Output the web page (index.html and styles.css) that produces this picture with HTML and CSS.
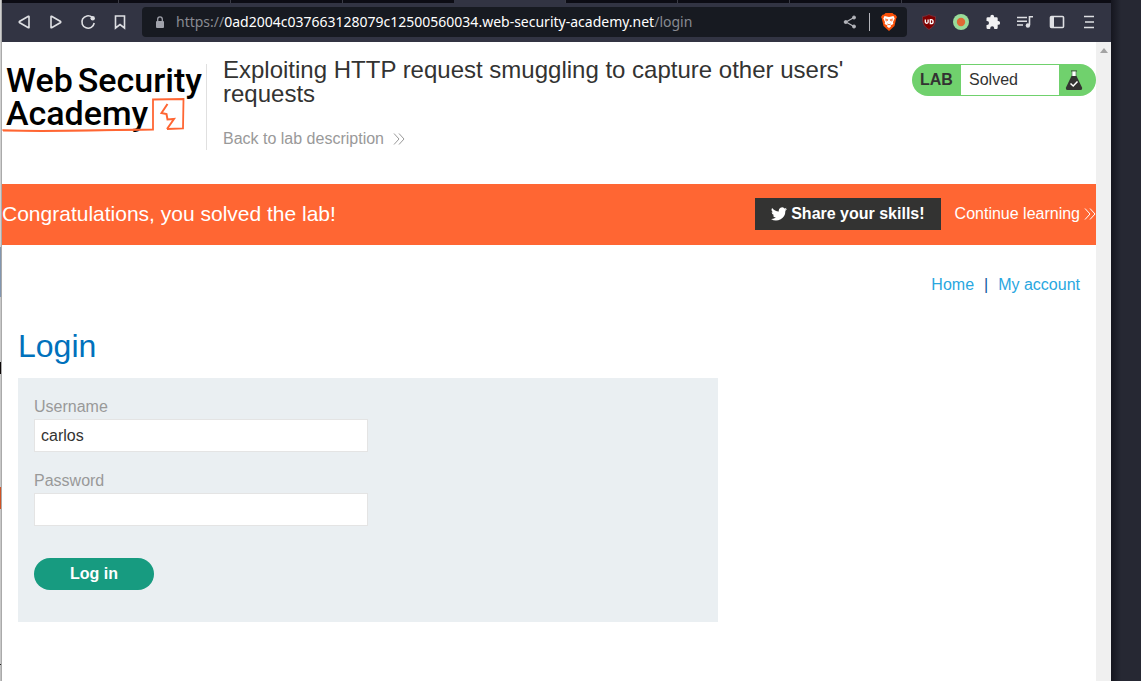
FILE: index.html
```
<!DOCTYPE html>
<html lang="en">
<head>
<meta charset="utf-8">
<title>Exploiting HTTP request smuggling to capture other users' requests</title>
<link rel="stylesheet" href="styles.css">
</head>
<body>
<div class="desktop">
  <div class="edge" aria-hidden="true"></div>
  <div class="window">
    <div class="tabs" aria-hidden="true">
      <span class="tab tab-first"></span><span class="tab"></span><span class="tab"></span><span class="tab tab-last"></span><span class="tab tab-active"></span><span class="tab"></span><span class="tab"></span><span class="tab"></span>
    </div>
    <div class="toolbar">
      <div class="tools">
        <button class="tool" aria-label="Back"><svg width="16" height="16" viewBox="0 0 16 16"><path d="M13 2.500V13.500Q13 14 12.400 13.700L3.400 8.500Q2.900 8 3.400 7.500L12.400 2.300Q13 2 13 2.500Z"/></svg></button>
        <button class="tool" aria-label="Forward"><svg width="16" height="16" viewBox="0 0 16 16"><path d="M3 2.500V13.500Q3 14 3.600 13.700L12.600 8.500Q13.100 8 12.600 7.500L3.600 2.300Q3 2 3 2.500Z"/></svg></button>
        <button class="tool" aria-label="Reload"><svg width="16" height="16" viewBox="0 0 16 16"><path d="M12 3.200A6.200 6.200 0 1 0 14.200 9"/><circle class="solid" cx="12.700" cy="4.200" r="2.200"/></svg></button>
        <button class="tool" aria-label="Bookmark"><svg width="16" height="16" viewBox="0 0 16 16"><path d="M3.500 2H12.500V14L8 10.500L3.500 14Z"/></svg></button>
      </div>
      <div class="address">
        <svg width="10" height="12" viewBox="0 0 10 12"><rect x="1" y="5" width="8" height="7" rx="1" fill="#a0a2ab"/><path d="M2.700 5V3.200a2.300 2.300 0 0 1 4.600 0V5" fill="none" stroke="#a0a2ab" stroke-width="1.300"/></svg>
        <span class="url">https://<b>0ad2004c037663128079c12500560034.web-security-academy.net</b>/login</span>
        <button class="share" aria-label="Share"><svg width="14" height="14" viewBox="0 0 14 14" fill="#b4b5bb" stroke="#b4b5bb"><path d="M11 2.500L3 7L11 11.500" fill="none" stroke-width="1.300"/><circle cx="11" cy="2.500" r="1.500"/><circle cx="2.700" cy="7" r="1.500"/><circle cx="11" cy="11.500" r="1.500"/></svg></button>
        <button class="brave" aria-label="Brave Shields"><svg width="16" height="18" viewBox="0 0 16 18"><path d="M4.500 0H11.500L13 1.500L14.500 1.700L16 4L15.200 5.500L13.500 13L8 18L2.500 13L.8 5.500L0 4L1.500 1.700L3 1.500Z" fill="#fb5008"/><path d="M3.500 3L8 4L12.500 3L13.700 5.500L12 9L12.300 11L9.500 12.500L10 13.500L8 15L6 13.500L6.500 12.500L3.700 11L4 9L2.300 5.500Z" fill="#fff"/><path d="M4 6L6.800 6.700L6 8L4.500 7.500M12 6L9.200 6.700L10 8L11.500 7.500M6.300 11L8 11.800L9.700 11" fill="none" stroke="#fb5008" stroke-width=".8"/></svg></button>
      </div>
      <div class="tools">
        <button class="tool" aria-label="uBlock"><svg class="art" width="16" height="16" viewBox="0 0 16 16"><path d="M8 .5C10 1.700 12 2.300 14.500 2.500C14.700 9 13.500 12.500 8 15.500C2.500 12.500 1.300 9 1.500 2.500C4 2.300 6 1.700 8 .5Z" fill="#800000" stroke="#6d3340" stroke-width="1"/><path d="M4.300 5.500V8.300a1.500 1.500 0 0 0 2.800 0V5.500M9.300 5.700v4h.8a2 2 0 0 0 0-4Z" fill="none" stroke="#fff" stroke-width="1.300"/></svg></button>
        <button class="tool" aria-label="Proxy"><svg class="art" width="16" height="16" viewBox="0 0 16 16"><circle cx="8" cy="8" r="8" fill="#99dc99"/><circle cx="8" cy="8" r="4.200" fill="#df6935"/></svg></button>
        <button class="tool" aria-label="Extensions"><svg class="art" width="16" height="16" viewBox="0 0 16 16"><path d="M1.500 4.500Q1.500 3.200 2.800 3.200H5.300V2.700a1.900 1.900 0 0 1 3.800 0V3.200H11.500Q12.700 3.200 12.700 4.500V7H13.200a1.900 1.900 0 0 1 0 3.800H12.700V13.500Q12.700 15 11.500 15H9.200V14.300a2 2 0 0 0-4 0V15H2.800Q1.500 15 1.500 13.500V11H2a2 2 0 0 0 0-4H1.500Z" fill="#f1f1f3"/></svg></button>
        <button class="tool" aria-label="Media"><svg width="18" height="16" viewBox="0 0 18 16"><path d="M1 3.500H11M1 7.200H11M1 11H7M17 2.800H13.500V11"/><circle class="solid" cx="11.900" cy="11.500" r="2.200"/></svg></button>
        <button class="tool" aria-label="Sidebar"><svg width="16" height="16" viewBox="0 0 16 16"><rect x="1.500" y="2.500" width="13" height="11" rx="1"/><path d="M2 3H5V13H2Z" class="solid"/></svg></button>
        <button class="tool" aria-label="Menu"><svg width="16" height="16" viewBox="0 0 16 16"><path d="M3 2.500H13M4 8H13M3 13.500H13"/></svg></button>
      </div>
    </div>
    <div class="viewport">
      <div class="page">
        <header class="lab-header">
          <a class="logo" href="#">
            <span class="logo-row"><span>Web</span><span>Security</span></span>
            <span class="logo-row">Academy</span>
            <svg class="logo-line" width="184" height="38" viewBox="0 0 184 38" fill="none" stroke="#ff6633"><path d="M1 33.500L40 34L151 32.500V2.500L181.500 2L181 31.500L165 32" stroke-width="1.800"/><path d="M165 32L172 22L165.500 22.500L164.500 17L159.500 16L165.500 7" stroke-width="2"/><path d="M0 33Q60 35 150 32.500" stroke-width="1"/></svg>
          </a>
          <div class="title">
            <h1>Exploiting HTTP request smuggling to capture other users' requests</h1>
            <a class="back" href="#">Back to lab description <svg width="12" height="12" viewBox="0 0 12 12"><path d="M1 .5L6 6L1 11.500M6 .5L11 6L6 11.500"/></svg></a>
          </div>
          <div class="status">
            <b>LAB</b><span class="state">Solved</span>
            <svg width="18" height="20" viewBox="0 0 18 20"><path d="M6 1H12" stroke="#333332" stroke-width="1"/><path d="M7 1.500H11V6H7Z" fill="#fff"/><path d="M7 1V7M11 1V7" stroke="#55705a" stroke-width=".7"/><path d="M6.500 6H11.500L17 17.500Q17.500 20 15.500 20H2.500Q.5 20 1 17.500Z" fill="#333332"/><path d="M5.500 13.500L8.200 16L12.500 11.500" fill="none" stroke="#fff" stroke-width="1.500"/></svg>
          </div>
        </header>
        <section class="banner">
          <h2>Congratulations, you solved the lab!</h2>
          <a class="skills" href="#"><svg width="16" height="14" viewBox="0 0 24 20"><path fill="#fff" d="M24 2.400a10 10 0 0 1-2.800.8A5 5 0 0 0 23.300.5a10 10 0 0 1-3.100 1.200A4.900 4.900 0 0 0 11.800 6.200 14 14 0 0 1 1.700 1a4.900 4.900 0 0 0 1.500 6.600A4.900 4.900 0 0 1 1 7v.1A4.900 4.900 0 0 0 4.900 11.900a5 5 0 0 1-2.200.1 4.900 4.900 0 0 0 4.600 3.400A9.900 9.900 0 0 1 0 17.500 14 14 0 0 0 21.500 5.100 10 10 0 0 0 24 2.400Z"/></svg>Share your skills!</a>
          <a class="continue" href="#">Continue learning <svg width="12" height="12" viewBox="0 0 12 12"><path d="M1 .5L6 6L1 11.500M6 .5L11 6L6 11.500"/></svg></a>
        </section>
        <main class="content">
          <nav class="links"><a href="#">Home</a><span>|</span><a href="#">My account</a></nav>
          <h2 class="heading">Login</h2>
          <form class="login">
            <label for="username">Username</label>
            <input id="username" type="text" value="carlos">
            <label for="password">Password</label>
            <input id="password" type="password">
            <button type="button">Log in</button>
          </form>
        </main>
      </div>
      <div class="scrollbar" aria-hidden="true"><svg width="8" height="5" viewBox="0 0 8 5"><path d="M0 5L4 0L8 5Z" fill="#a3a3a3"/></svg></div>
    </div>
  </div>
  <div class="wallpaper" aria-hidden="true"></div>
</div>
</body>
</html>
```
FILE: styles.css
```
* { box-sizing: border-box; }
body {
  margin: 0;
  color: #333332;
  font: 16px/20px "Liberation Sans", Arial, sans-serif;
}
h1, h2 { margin: 0; font-weight: 400; }
a { color: inherit; text-decoration: none; }
button { border: 0; padding: 0; background: none; font: inherit; }

.desktop {
  display: grid;
  grid-template-columns: 2px minmax(0, 1fr) 30px;
  min-height: 100vh;
}
.edge {
  border-right: 1px solid #aaa;
  background: linear-gradient(#d0d0d0 247px, #8296b0 247px 297px, #c8c8c8 297px 362px, #0a0505 362px 374px, #c8c8c8 374px 487px, #cf5224 487px 509px, #c8c8c8 509px 664px, #222 664px 665px, #c0c0c0 665px);
}
.wallpaper { background: linear-gradient(90deg, #15161f, #262833 10px); }
.window { display: flex; flex-direction: column; background: #fff; }

.tabs { display: flex; height: 3px; background: #0c0c14; overflow: hidden; }
.tab { flex: 0 0 112px; border-right: 1px solid #3a3b45; }
.tab-first { flex-basis: 117px; }
.tab-last { border: 0; flex-basis: 111px; }
.tab-active { background: #323443; }

.toolbar {
  display: flex;
  align-items: center;
  gap: 6px;
  padding: 4px 6px 5px;
  background: #323443;
}
.tools { display: flex; }
.tool {
  display: grid;
  place-items: center;
  width: 32px;
  height: 30px;
}
.tool svg { fill: none; stroke: #dedfe3; stroke-width: 1.6; }
.tool .art { stroke: none; }
.tool .solid { fill: #dedfe3; stroke: none; }
.address {
  display: flex;
  flex: 1;
  align-items: center;
  min-width: 0;
  height: 30px;
  padding: 0 10px 0 13px;
  border-radius: 4px;
  background: #171a21;
}
.url {
  flex: 1;
  overflow: hidden;
  padding-left: 11px;
  color: #888a91;
  font: 14px/20px "Noto Sans", "Open Sans", sans-serif;
  white-space: nowrap;
}
.url b { color: #fff; font-weight: 400; }
.share, .brave { display: flex; }
.share { padding-right: 12px; }
.brave { padding-left: 11px; border-left: 1px solid #b4b5bb; }

.viewport { display: flex; flex: 1; }
.page { flex: 1; min-width: 0; }
.scrollbar {
  width: 15px;
  padding-top: 6px;
  background: #f0f0f0;
  text-align: center;
  line-height: 0;
}

.lab-header {
  display: flex;
  align-items: flex-start;
  padding: 22px 0 34px;
}
.logo {
  position: relative;
  flex: 0 0 205px;
  height: 86px;
  padding-left: 4px;
  border-right: 1px solid #e0e0e0;
  color: #000;
  font: 500 34px/33px Roboto, sans-serif;
  white-space: nowrap;
}
.logo-row { display: flex; gap: 5px; }
.logo-line { position: absolute; left: 0; top: 33px; }
.title { flex: 1; padding-left: 16px; }
.title h1 { margin-top: -6px; font-size: 24px; line-height: 24px; }
.back {
  display: inline-flex;
  align-items: center;
  gap: 9px;
  margin-top: 23px;
  color: #999;
}
.back svg, .continue svg { fill: none; stroke: currentColor; }
.status {
  display: flex;
  align-items: center;
  width: 184px;
  height: 32px;
  margin-left: 60px;
  padding: 1px 13px 1px 8px;
  border-radius: 16px;
  background: #70d16d;
}
.status b { width: 41px; }
.state { flex: 1; height: 30px; margin-right: 6px; padding-left: 8px; background: #fff; line-height: 30px; }

.banner {
  display: flex;
  align-items: center;
  height: 61px;
  padding-bottom: 2px;
  background: #ff6633;
  color: #fff;
}
.banner h2 { flex: 1; font-size: 21px; line-height: 24px; }
.skills {
  display: flex;
  align-items: center;
  gap: 4px;
  height: 32px;
  margin-right: 14px;
  padding: 0 16px;
  background: #333332;
  font-weight: 700;
}
.continue { display: flex; align-items: center; gap: 4px; }

.content { padding: 30px 16px; }
.links { display: flex; justify-content: flex-end; gap: 10px; color: #0d5a9b; }
.links a { color: #29a7df; }
.heading { margin-top: 33px; color: #0071bc; font-size: 32px; line-height: 36px; }
.login {
  display: flex;
  flex-direction: column;
  align-items: flex-start;
  max-width: 700px;
  margin-top: 14px;
  padding: 19px 16px 32px;
  background: #eaeff2;
}
.login label { color: #999; line-height: 20px; }
.login input {
  width: 334px;
  max-width: 100%;
  height: 33px;
  margin: 2px 0 19px;
  padding: 0 6px;
  border: 1px solid #e4e4e4;
  background: #fff;
  color: #333332;
  font: inherit;
}
.login button {
  width: 120px;
  height: 32px;
  margin-top: 13px;
  border-radius: 16px;
  background: #179b80;
  color: #fff;
  font-weight: 700;
}
```
